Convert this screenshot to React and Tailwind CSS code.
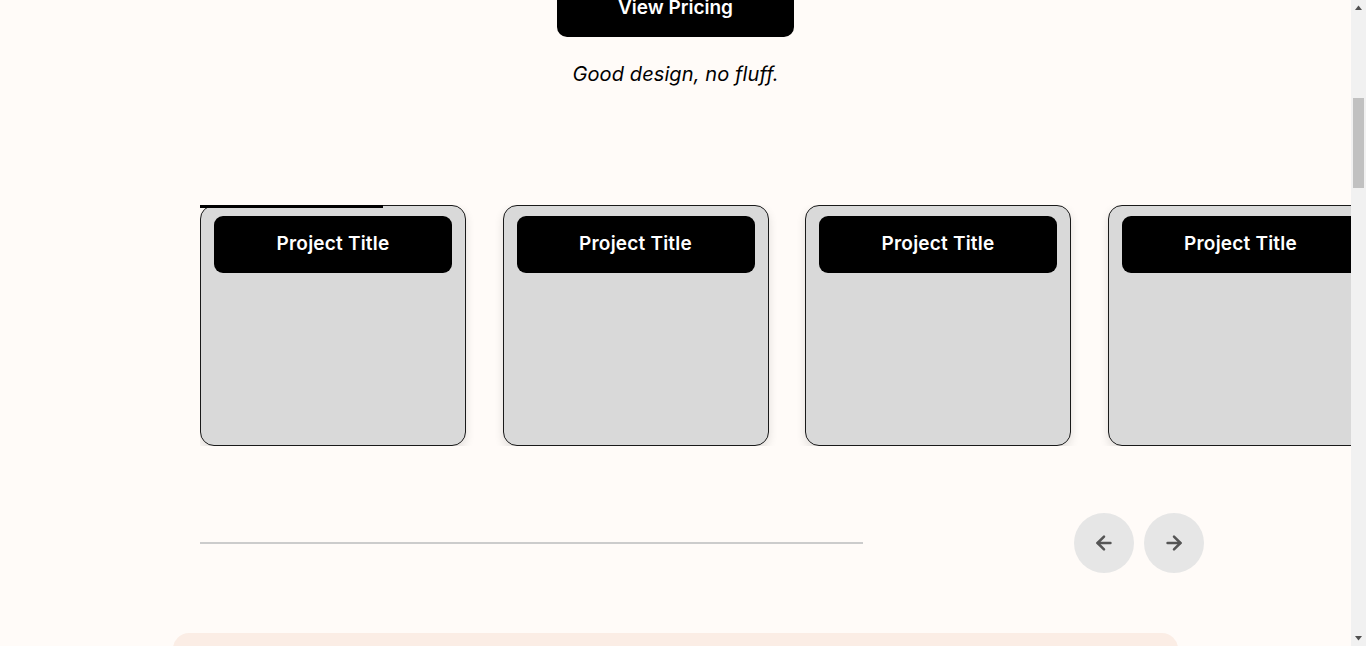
import { ArrowLeft, ArrowRight } from "lucide-react";

const projects = ["Project Title", "Project Title", "Project Title", "Project Title"];

const ProjectCard = ({ title }) => (
  <div className="shrink-0 w-[266px] h-[241px] rounded-[14px] border border-[#1a1a1a] bg-[#d9d9d9] p-[10px_13px] shadow-[0_4px_10px_rgba(0,0,0,0.12)]">
    <div className="h-[57px] rounded-[9px] bg-black flex items-start justify-center pt-[14px]">
      <span className="text-white text-[19px] font-semibold tracking-[0.2px] font-['Inter',sans-serif]">
        {title}
      </span>
    </div>
  </div>
);

const FakeScrollbar = () => (
  <div className="w-[15px] shrink-0 h-full bg-[#f1f1f1] flex flex-col items-center">
    <svg width="15" height="15" viewBox="0 0 15 15" className="shrink-0">
      <path d="M4 10 L7.5 5.5 L11 10 Z" fill="#505050" />
    </svg>
    <div className="mt-[83px] w-[11px] h-[90px] bg-[#c1c1c1]" />
    <div className="flex-1" />
    <svg width="15" height="15" viewBox="0 0 15 15" className="shrink-0">
      <path d="M4 5 L7.5 9.5 L11 5 Z" fill="#505050" />
    </svg>
  </div>
);

export default function App() {
  return (
    <div className="h-[646px] flex overflow-hidden bg-[#fffbf8] font-['Inter',sans-serif]">
      <main className="flex-1 min-w-0 overflow-hidden">
        <section className="flex flex-col items-center">
          <button className="mt-[-20px] w-[237px] h-[57px] rounded-[10px] bg-black text-white text-[19px] font-semibold flex items-start justify-center pt-[14px]">
            View Pricing
          </button>
          <p className="mt-[23px] text-[20px] leading-[28px] italic text-black tracking-[0.1px]">
            Good design, no fluff.
          </p>
        </section>

        <section className="mt-[117px] pl-[200px]">
          <div className="relative flex gap-[36.5px] overflow-hidden">
            {projects.map((p, i) => (
              <ProjectCard key={i} title={p} />
            ))}
            <div className="absolute left-0 top-0 w-[183px] h-[3px] bg-black" />
          </div>

          <div className="mt-[67px] flex items-center">
            <div className="w-[663px] h-[2px] bg-[#cccccc]" />
            <div className="ml-[211px] flex gap-[10px]">
              <button className="w-[60px] h-[60px] rounded-full bg-[#e6e6e6] flex items-center justify-center">
                <ArrowLeft size={22} strokeWidth={2.75} color="#555555" />
              </button>
              <button className="w-[60px] h-[60px] rounded-full bg-[#e6e6e6] flex items-center justify-center">
                <ArrowRight size={22} strokeWidth={2.75} color="#555555" />
              </button>
            </div>
          </div>
        </section>

        <section className="mt-[60px] px-[173px]">
          <div className="h-[200px] rounded-t-[16px] bg-[#fbede5]" />
        </section>
      </main>
      <FakeScrollbar />
    </div>
  );
}
